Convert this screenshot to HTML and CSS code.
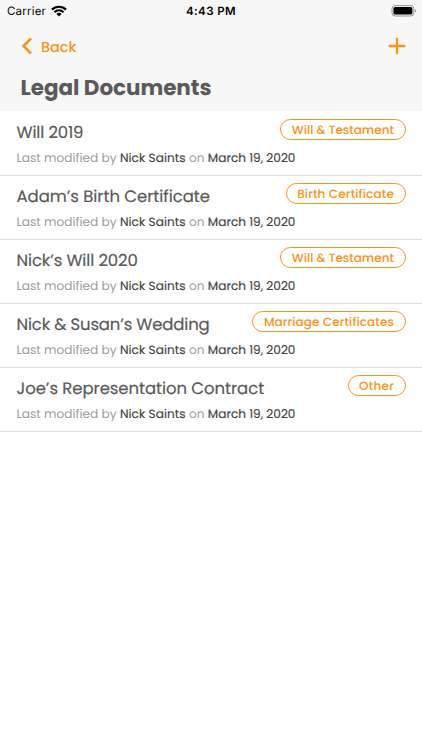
FILE: index.html
```html
<!DOCTYPE html>
<html lang="en">
<head>
<meta charset="utf-8">
<title>Legal Documents</title>
<link rel="stylesheet" href="styles.css">
</head>
<body>
<header class="header">
  <div class="status">
    <div class="status-left"><span class="carrier">Carrier</span>
      <svg class="wifi" width="16" height="12" viewBox="0 0 16 12" fill="none" stroke="#000"><path d="M1 4.6a10 10 0 0 1 14 0" stroke-width="2.2"/><path d="M3.5 7.2a6.4 6.4 0 0 1 9 0" stroke-width="2"/><path d="M8 11.6 5.4 9a3.7 3.7 0 0 1 5.2 0Z" fill="#000" stroke="none"/></svg>
    </div>
    <span class="time">4:43 PM</span>
    <svg class="battery" width="26" height="12" viewBox="0 0 26 12"><rect x="1" y=".6" width="21.8" height="10.4" rx="3" fill="none" stroke="#929292"/><rect x="2.4" y="2" width="19" height="7.6" rx="1.6"/><path d="M24.1 4v3.6c1.4-.5 1.4-3.1 0-3.6Z" fill="#888"/></svg>
  </div>
  <nav class="nav">
    <a class="back"><svg width="12" height="18" viewBox="0 0 12 18" fill="none" stroke="currentColor" stroke-width="2.5"><path d="M10 1.5 2.5 9l7.5 7.5"/></svg><span>Back</span></a>
    <svg class="add" width="18" height="18" viewBox="0 0 18 18" stroke="currentColor" stroke-width="2.3"><path d="M9 .7v16.6M.6 9h16.8"/></svg>
  </nav>
  <h1 class="heading">Legal Documents</h1>
</header>
<main class="list">
  <article class="row"><div class="top"><h2 class="title will">Will 2019</h2><span class="tag">Will &amp; Testament</span></div>
    <p class="meta"><span class="label">Last modified by</span><span class="name">Nick Saints</span><span class="on">on</span><span class="date">March 19, 2020</span></p></article>
  <article class="row"><div class="top"><h2 class="title adam">Adam’s Birth Certificate</h2><span class="tag birth">Birth Certificate</span></div>
    <p class="meta"><span class="label">Last modified by</span><span class="name">Nick Saints</span><span class="on">on</span><span class="date">March 19, 2020</span></p></article>
  <article class="row"><div class="top"><h2 class="title nick">Nick’s Will 2020</h2><span class="tag">Will &amp; Testament</span></div>
    <p class="meta"><span class="label">Last modified by</span><span class="name">Nick Saints</span><span class="on">on</span><span class="date">March 19, 2020</span></p></article>
  <article class="row"><div class="top"><h2 class="title wedding">Nick &amp; Susan’s Wedding</h2><span class="tag marriage">Marriage Certificates</span></div>
    <p class="meta"><span class="label">Last modified by</span><span class="name">Nick Saints</span><span class="on">on</span><span class="date">March 19, 2020</span></p></article>
  <article class="row"><div class="top"><h2 class="title joe">Joe’s Representation Contract</h2><span class="tag other">Other</span></div>
    <p class="meta"><span class="label">Last modified by</span><span class="name">Nick Saints</span><span class="on">on</span><span class="date">March 19, 2020</span></p></article>
</main>
</body>
</html>
```
FILE: styles.css
```css
* { box-sizing: border-box; }
body { margin: 0; background: #fff; font-family: Poppins, Inter, sans-serif; color: #5a5a5a; text-rendering: geometricPrecision; }
.header { height: 111px; background: #f7f7f7; }
.status { display: grid; grid-template-columns: 1fr auto 1fr; align-items: center; height: 22px; padding: 0 5px 0 7px; color: #000; font-family: Inter, sans-serif; font-size: 11.5px; }
.status-left { display: flex; align-items: center; gap: 5px; }
.carrier { letter-spacing: .2px; }
.time { margin-right: 2px; font-weight: 600; letter-spacing: .4px; }
.battery { justify-self: end; }
.nav { display: flex; align-items: center; justify-content: space-between; height: 48px; padding: 0 16px 0 20.5px; color: #fb9318; }
.back { display: flex; align-items: center; gap: 8.5px; font-size: 14.4px; font-weight: 500; }
.back span { padding-top: 4px; }
.heading { margin: 0; padding-left: 20.5px; font-size: 21.5px; line-height: 35px; font-weight: 700; letter-spacing: -.05px; }
.list { padding-top: 1px; }
.row { height: 64px; padding: 7px 16.5px 0; border-bottom: 1px solid #dedede; }
.top { display: flex; justify-content: space-between; align-items: flex-start; height: 28px; }
.title { margin: 0; font-size: 16.5px; line-height: 28px; font-weight: 400; white-space: nowrap; -webkit-text-stroke: .2px currentColor; }
.will { letter-spacing: -.15px; }
.adam { letter-spacing: -.04px; }
.nick { letter-spacing: -.13px; }
.wedding { letter-spacing: -.17px; }
.joe { letter-spacing: -.06px; }
.tag { height: 21px; padding: 0 10.5px; border: 1.3px solid #fb9318; border-radius: 10.5px; color: #fb9318; font-size: 12px; line-height: 21px; font-weight: 500; white-space: nowrap; }
.birth { letter-spacing: .17px; }
.marriage { letter-spacing: .12px; }
.other { letter-spacing: .25px; }
.meta { display: flex; gap: 3.4px; margin: 0; font-size: 12.1px; line-height: 23px; color: #414141; white-space: nowrap; }
.label, .on { color: #9b9b9b; }
.label { letter-spacing: .03px; }
.name, .date { -webkit-text-stroke: .15px currentColor; }
.name { letter-spacing: .06px; }
```
